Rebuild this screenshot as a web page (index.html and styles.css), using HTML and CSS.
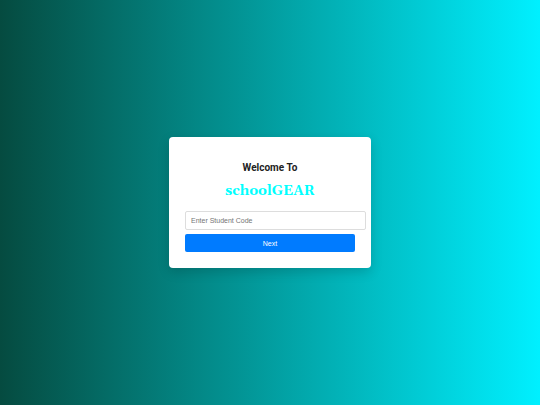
FILE: index.html
```html
<!DOCTYPE html>
<html lang="en">
<head>
<meta charset="utf-8">
<meta name="viewport" content="width=device-width, initial-scale=1">
<title>schoolGEAR</title>
<link rel="stylesheet" href="styles.css">
</head>
<body>
<main class="card">
  <h1 class="welcome">Welcome To</h1>
  <p class="brand">schoolGEAR</p>
  <form class="form">
    <input class="code" type="text" placeholder="Enter Student Code" aria-label="Student Code">
    <button class="next" type="button">Next</button>
  </form>
</main>
</body>
</html>
```

FILE: styles.css
```css
* {
  box-sizing: border-box;
}

body {
  margin: 0;
  min-height: 100vh;
  display: flex;
  align-items: center;
  justify-content: center;
  background: linear-gradient(to right, #054b40, #00f0ff);
  font-family: Roboto, sans-serif;
}

.card {
  width: 100%;
  max-width: 202px;
  padding: 24px 16px 16px;
  border-radius: 4px;
  background: #fff;
  box-shadow: 0 4px 12px rgba(0, 0, 0, 0.16);
  text-align: center;
}

.welcome {
  margin: 0 0 4px;
  font-size: 10px;
  line-height: 14px;
  font-weight: 700;
  color: #222;
}

.brand {
  margin: 0 0 8px;
  font-family: Gelasio, "Liberation Serif", serif;
  font-size: 14px;
  line-height: 24px;
  font-weight: 700;
  color: #0ff;
}

.form {
  display: flex;
  flex-direction: column;
  gap: 4px;
}

.code,
.next {
  font-family: "Liberation Sans", Arial, sans-serif;
  font-size: 7px;
  border-radius: 2px;
}

.code {
  width: calc(100% + 11px);
  height: 19px;
  padding: 0 5px;
  border: 1px solid #ddd;
  background: #fff;
}

.code::placeholder {
  color: #757575;
  opacity: 1;
}

.next {
  width: 100%;
  height: 18px;
  padding: 0;
  border: 0;
  background: #007bff;
  color: #fff;
}
```
